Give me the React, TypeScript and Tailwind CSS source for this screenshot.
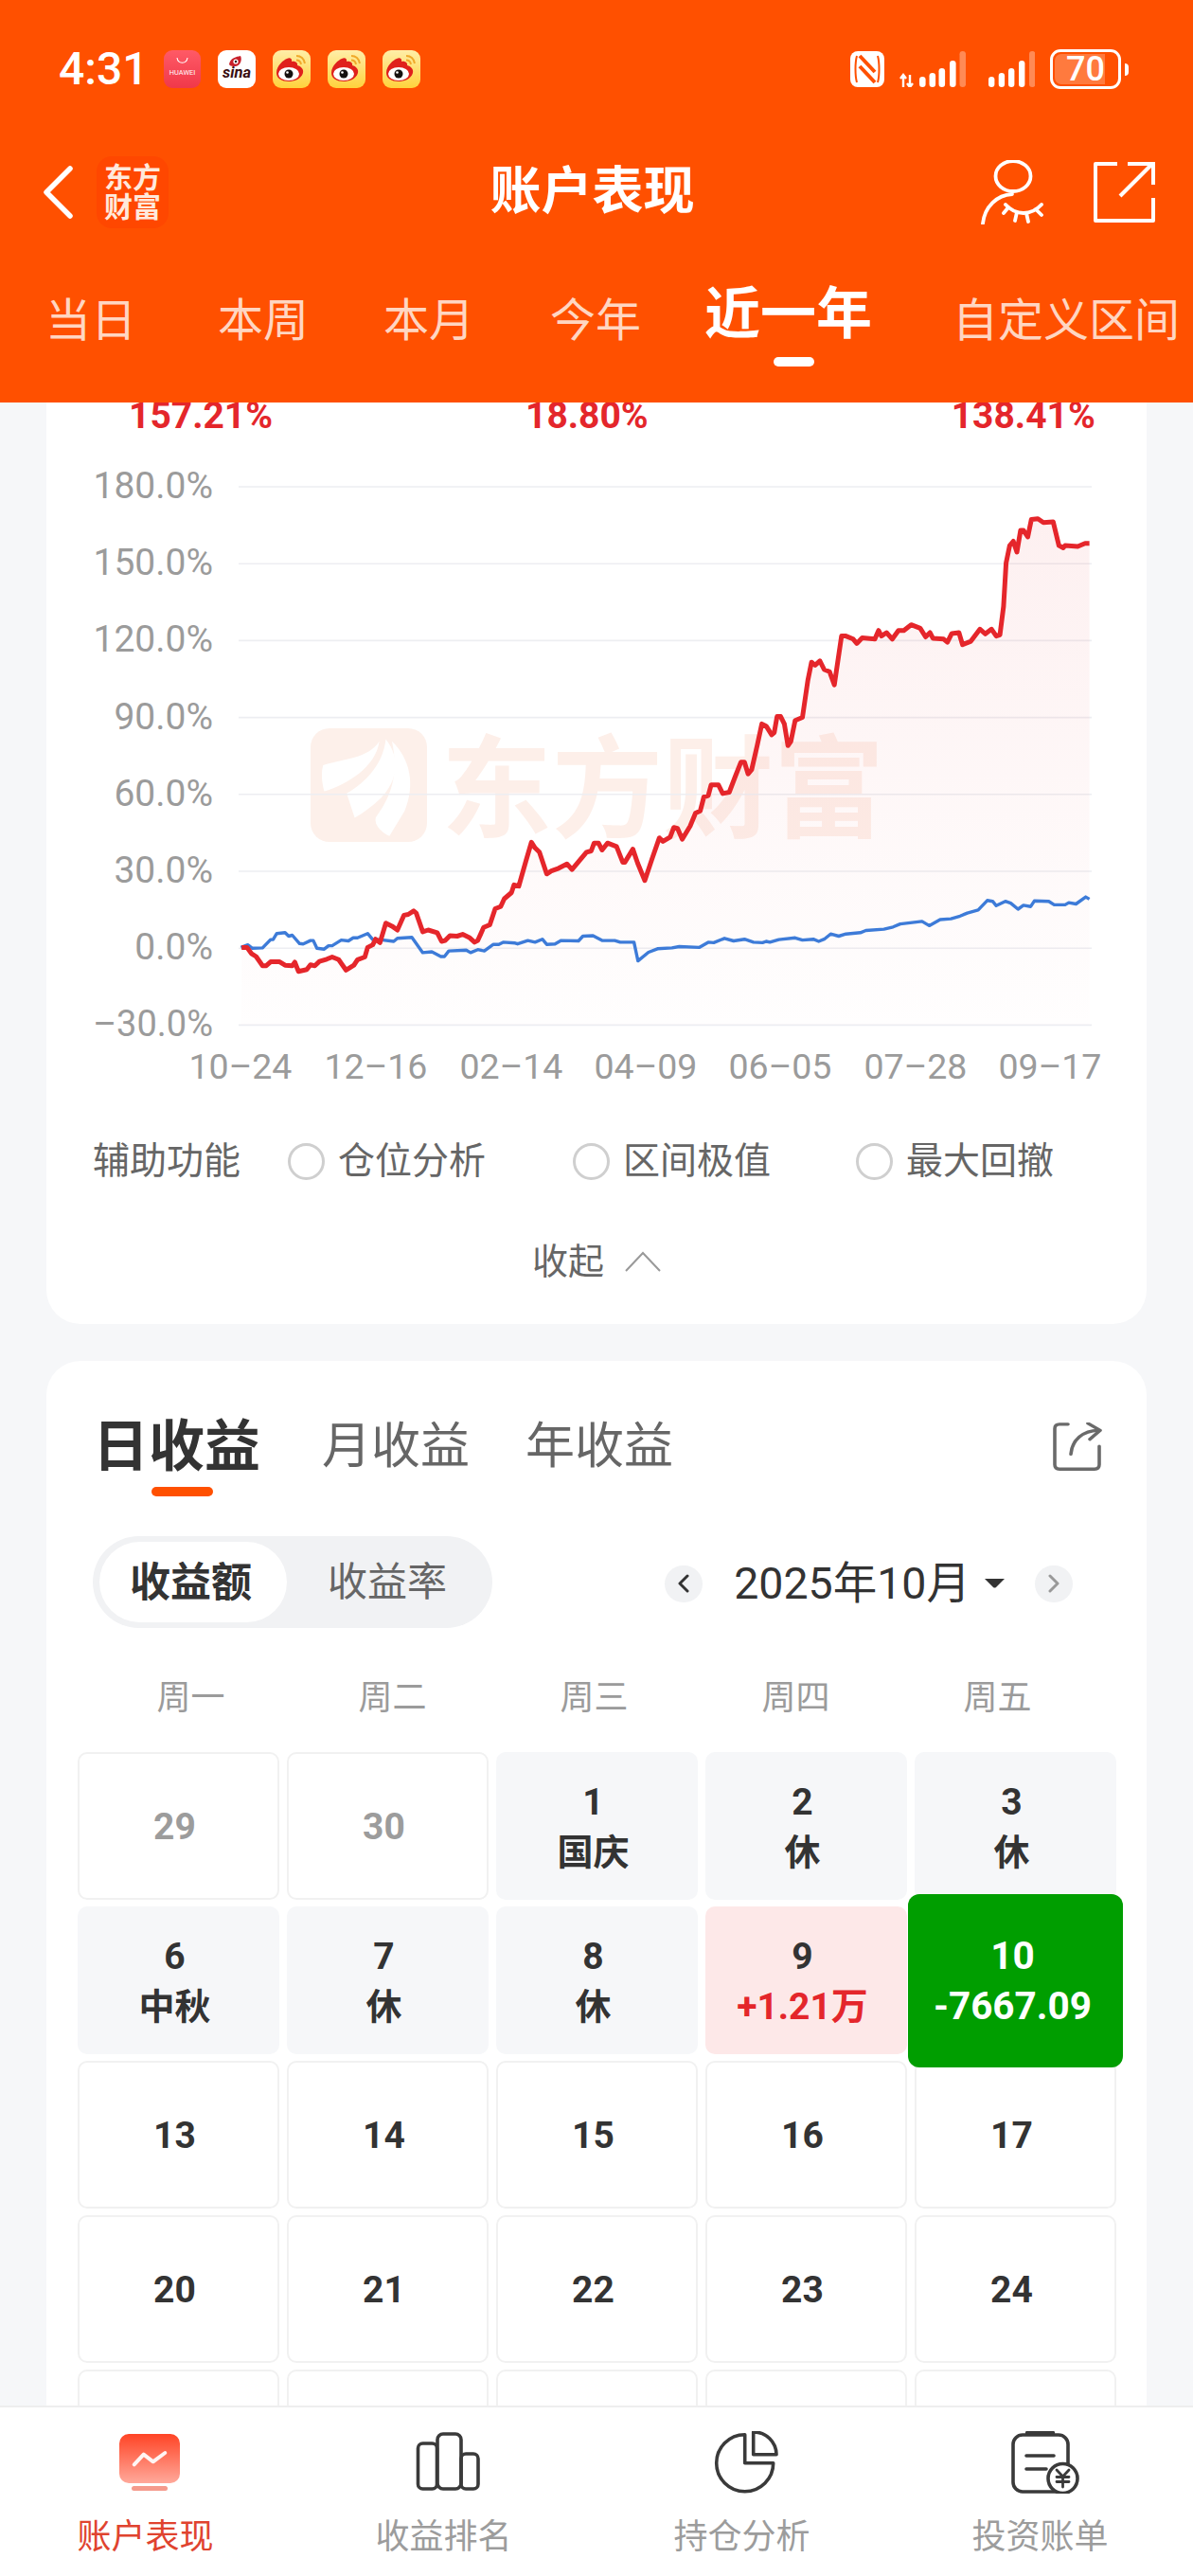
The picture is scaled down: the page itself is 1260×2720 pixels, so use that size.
import React from "react";

const zx3 = (x: number) => 60 + x / 2.6133;
const zx4 = (x: number) => 660 + x / 2.6133;
const zy = (y: number) => 420 + y / 2.1778;

const red3: number[][] = [[510,1264],[525,1264],[537,1278],[550,1285],[568,1306],[578,1306],[590,1297],[615,1297],[630,1305],[650,1306],[657,1298],[667,1319],[690,1315],[700,1304],[712,1306],[725,1296],[745,1291],[760,1286],[778,1292],[798,1316],[820,1305],[830,1292],[850,1286],[858,1264],[872,1258],[880,1245],[892,1253],[908,1208],[925,1215],[940,1224],[958,1190],[970,1188],[985,1180],[992,1185],[1010,1228],[1025,1224],[1050,1230],[1062,1250],[1072,1248],[1085,1237],[1105,1238],[1120,1234],[1140,1242],[1153,1252],[1162,1248],[1178,1218],[1195,1212],[1210,1175],[1225,1170],[1235,1152],[1255,1138],[1262,1120],[1275,1123],[1295,1065],[1310,1022],[1320,1035],[1332,1045],[1352,1095],[1365,1088],[1385,1082],[1408,1072],[1422,1085],[1445,1062],[1462,1045],[1475,1042],[1483,1024],[1495,1024],[1505,1040],[1520,1024],[1545,1032],[1562,1068]];
const red4: number[][] = [[0,1068],[22,1038],[35,1070],[55,1110],[75,1060],[95,1012],[105,1020],[125,1010],[135,988],[145,990],[158,1015],[180,985],[195,955],[208,950],[218,918],[230,915],[238,890],[258,890],[270,910],[288,907],[305,870],[320,838],[330,838],[340,865],[350,855],[365,800],[378,750],[390,755],[405,775],[412,770],[420,733],[430,733],[440,750],[450,800],[458,790],[470,742],[490,735],[505,650],[515,608],[525,615],[538,605],[550,625],[565,630],[578,660],[598,548],[610,548],[630,555],[640,565],[655,552],[690,555],[700,535],[708,548],[722,540],[738,555],[755,535],[770,535],[790,522],[815,530],[830,550],[842,540],[850,553],[880,555],[890,562],[902,542],[922,540],[932,568],[955,560],[980,532],[995,543],[1012,532],[1025,548],[1035,545],[1045,480],[1052,380],[1062,340],[1072,330],[1082,355],[1092,305],[1100,305],[1112,320],[1122,280],[1140,278],[1155,287],[1182,285],[1198,340],[1210,345],[1215,340],[1250,342],[1270,335],[1282,335]];
const blue3: number[][] = [[508,1264],[527,1258],[540,1266],[568,1265],[590,1246],[597,1246],[607,1232],[630,1230],[640,1238],[650,1236],[670,1255],[680,1256],[700,1248],[708,1248],[718,1266],[738,1268],[750,1260],[760,1260],[785,1247],[805,1249],[818,1242],[830,1242],[858,1232],[872,1246],[890,1246],[930,1250],[940,1243],[980,1241],[1010,1276],[1035,1274],[1060,1285],[1070,1285],[1082,1272],[1130,1270],[1142,1276],[1162,1269],[1180,1272],[1205,1257],[1220,1257],[1232,1252],[1265,1254],[1272,1256],[1300,1248],[1320,1252],[1340,1245],[1352,1257],[1375,1256],[1392,1248],[1440,1249],[1452,1238],[1480,1237],[1505,1248],[1540,1248],[1555,1252]];
const blue4: number[][] = [[0,1252],[25,1252],[36,1295],[65,1275],[90,1267],[130,1265],[150,1262],[205,1264],[230,1252],[245,1253],[275,1243],[300,1249],[330,1245],[355,1252],[380,1253],[390,1250],[400,1252],[425,1246],[470,1242],[490,1247],[520,1245],[535,1250],[550,1245],[568,1233],[590,1238],[610,1233],[650,1230],[665,1225],[715,1222],[740,1217],[760,1210],[820,1204],[840,1214],[870,1200],[900,1198],[925,1192],[945,1185],[975,1178],[1000,1156],[1015,1158],[1025,1168],[1050,1158],[1065,1162],[1085,1176],[1100,1167],[1120,1170],[1130,1157],[1170,1158],[1185,1166],[1215,1166],[1225,1161],[1245,1164],[1272,1148],[1282,1153]];

const toPts = (a: number[][], b: number[][]) =>
  [...a.map(([x, y]) => `${zx3(x).toFixed(1)},${zy(y).toFixed(1)}`), ...b.map(([x, y]) => `${zx4(x).toFixed(1)},${zy(y).toFixed(1)}`)].join(" ");
const redPts = toPts(red3, red4);
const bluePts = toPts(blue3, blue4);
const areaPts = `${zx3(510).toFixed(1)},1082 ${redPts} ${zx4(1282).toFixed(1)},1082`;

const yLabels = ["180.0%", "150.0%", "120.0%", "90.0%", "60.0%", "30.0%", "0.0%", "–30.0%"];
const xLabels: [string, number][] = [["10–24", 254], ["12–16", 397], ["02–14", 540], ["04–09", 682], ["06–05", 824], ["07–28", 967], ["09–17", 1109]];

function Chart() {
  return (
    <svg width="1162" height="700" viewBox="49 460 1162 700" className="block">
      <defs>
        <linearGradient id="area" x1="0" y1="0" x2="0" y2="1">
          <stop offset="0" stopColor="#e5262b" stopOpacity="0.07" />
          <stop offset="1" stopColor="#e5262b" stopOpacity="0.005" />
        </linearGradient>
      </defs>
      <rect x="328" y="769" width="123" height="120" rx="20" fill="#fdf0ea" />
      <g transform="translate(60 420) scale(0.3827 0.4592)" fill="#ffffff">
        <path d="M735 845 C790 830 860 830 890 790 C880 850 800 890 738 905 C730 880 730 860 735 845Z" />
        <path d="M800 910 C850 885 900 845 908 785 C950 830 940 880 895 920 C870 940 845 955 822 966 Z" />
        <path d="M880 965 C920 920 945 870 925 790 C975 830 990 890 960 950 L918 1008 C900 1000 875 985 880 965Z" />
      </g>
      <text x="466" y="875" fontSize="117" fontWeight="700" fill="#fdefe9">东方财富</text>
      {yLabels.map((t, i) => (
        <g key={t}>
          <line x1="252" x2="1153" y1={514 + i * 81.2} y2={514 + i * 81.2} stroke="#edeef2" strokeWidth="1.6" />
          <text x="225" y={526 + i * 81.2} textAnchor="end" fontSize={i === 7 ? 38 : 39} fill="#9b9b9b">{t}</text>
        </g>
      ))}
      {xLabels.map(([t, x]) => (
        <text key={t} x={x} y="1139" textAnchor="middle" fontSize="37.500" fill="#9b9b9b">{t}</text>
      ))}
      <polygon points={areaPts} fill="url(#area)" />
      <polyline points={bluePts} fill="none" stroke="#3d7bd8" strokeWidth="3.4" strokeLinejoin="round" />
      <polyline points={redPts} fill="none" stroke="#e5262b" strokeWidth="5" strokeLinejoin="round" />
    </svg>
  );
}

function Huawei() {
  return (
    <svg width="39" height="40" viewBox="0 0 39 40">
      <defs>
        <linearGradient id="hw" x1="0" y1="0" x2="0" y2="1">
          <stop offset="0" stopColor="#ff5a66" />
          <stop offset="1" stopColor="#f0384a" />
        </linearGradient>
      </defs>
      <rect width="39" height="40" rx="9" fill="url(#hw)" />
      <path d="M14 8 C15 15 24 15 25 8" fill="none" stroke="#fff" strokeWidth="1.1" />
      <text x="19.5" y="26" textAnchor="middle" fontSize="7.4" fill="#fff">HUAWEI</text>
    </svg>
  );
}

function Sina() {
  return (
    <svg width="40" height="40" viewBox="0 0 40 40">
      <rect width="40" height="40" rx="9" fill="#fff" />
      <path d="M12 15 C13 8 20 7 24 6 C26 10 24 16 19 17 C16 17 13 17 12 15Z" fill="#c8202a" />
      <circle cx="19" cy="12" r="2.6" fill="#fff" />
      <circle cx="19" cy="12" r="1.2" fill="#2a0c10" />
      <text x="20" y="29" textAnchor="middle" fontSize="16.5" fontWeight="700" fontStyle="italic" fill="#3a0e12">sina</text>
    </svg>
  );
}

function Weibo({ id }: { id: string }) {
  return (
    <svg width="40" height="40" viewBox="0 0 40 40">
      <defs>
        <linearGradient id={id} x1="0" y1="0" x2="0" y2="1">
          <stop offset="0" stopColor="#ffeea8" />
          <stop offset="1" stopColor="#ffd23c" />
        </linearGradient>
      </defs>
      <rect width="40" height="40" rx="9" fill={`url(#${id})`} />
      <path d="M25 6 C30 6 33 9 34 14 M25 10.5 C27.5 10.5 29.5 12 30 15" fill="none" stroke="#f0a92a" strokeWidth="2" />
      <path d="M4 24 C4 16 12 10 15 9 C18 7 21 9 20 12 C24 11 27 14 26 16 C30 17 33 20 32 24 C30 31 22 33 17 33 C10 33 4 30 4 24Z" fill="#e0201c" />
      <ellipse cx="17" cy="25" rx="11" ry="7" fill="#fff" />
      <circle cx="17" cy="25" r="4.5" fill="#15110f" />
      <circle cx="15.5" cy="23.5" r="1.3" fill="#fff" />
    </svg>
  );
}

function Bars({ x, w }: { x: number[]; w: number }) {
  const tops = [27, 23, 18, 10, 0];
  return (
    <>
      {x.map((v, i) => (
        <rect key={v} x={v} y={tops[i]} width={w} height={38 - tops[i]} rx={w / 2} fill={i === 4 ? "#ff8a55" : "#fff"} />
      ))}
    </>
  );
}

function StatusBar() {
  return (
    <div className="flex h-[44px] items-center justify-between pl-[62px] pr-[68px] mt-[50px]">
      <div className="flex items-center">
        <span className="text-[48px] font-medium leading-[44px] text-white">4:31</span>
        <div className="ml-[16px] flex items-center gap-[18px]">
          <Huawei />
          <Sina />
          <Weibo id="wb1" />
          <Weibo id="wb2" />
          <Weibo id="wb3" />
        </div>
      </div>
      <div className="flex items-center">
        <svg width="36" height="38" viewBox="0 0 36 38">
          <rect width="36" height="38" rx="8" fill="#fff" />
          <path d="M7 5 C5 12 5 26 7 33 M29 5 C31 12 31 26 29 33" fill="none" stroke="#ff5000" strokeWidth="2" />
          <path d="M10 5 L26 22 M10 16 L26 33" fill="none" stroke="#ff5000" strokeWidth="4" />
        </svg>
        <svg className="ml-[16px]" width="70" height="38" viewBox="0 0 70 38">
          <path d="M4 25 V38 M1 29 L4 25 L7 29 M11 25 V38 M8 34 L11 38 L14 34" fill="none" stroke="#fff" strokeWidth="2.4" />
          <Bars x={[21, 31.5, 41.5, 53, 63.5]} w={6.6} />
        </svg>
        <svg className="ml-[24px]" width="49" height="38" viewBox="0 0 49 38">
          <Bars x={[0, 10.7, 21, 32, 43]} w={6.4} />
        </svg>
        <div className="relative ml-[16px] h-[42px] w-[75px] rounded-[11px] border-[3px] border-white">
          <div className="absolute bottom-[2px] left-[2px] top-[2px] w-[53px] rounded-l-[7px] bg-[#ff7a3e]" />
          <span className="absolute inset-0 flex items-center justify-center text-[36px] font-medium leading-none text-white">70</span>
        </div>
        <div className="ml-[4px] h-[13px] w-[4px] rounded-r-full bg-white" />
      </div>
    </div>
  );
}

function NavBar() {
  return (
    <div className="mt-[66px] grid h-[84px] grid-cols-[1fr_auto_1fr] items-center pl-[45px] pr-[40px]">
      <div className="flex items-center">
        <svg width="32" height="56" viewBox="0 0 32 56">
          <path d="M29 3 L4 28 L29 53" fill="none" stroke="#fff" strokeWidth="5.5" strokeLinecap="round" strokeLinejoin="round" />
        </svg>
        <div className="ml-[25px] flex h-[76px] w-[76px] flex-col items-center justify-center rounded-[16px] bg-[#ff4700] text-[30px] font-bold leading-[31px] text-[#ffe9dc]">
          <span>东方</span>
          <span>财富</span>
        </div>
      </div>
      <div className="pr-[14px] text-[54px] font-bold leading-[64px] text-white">账户表现</div>
      <div className="flex items-center justify-end gap-[53px]">
        <svg width="67" height="68" viewBox="0 0 67 68" fill="none" stroke="#fff" strokeWidth="3.8" strokeLinecap="round">
          <ellipse cx="35" cy="17" rx="18.5" ry="16" />
          <path d="M34 36 C18 37 5 49 3 67" />
          <path d="M27 47 C38 59 54 59 65 47" />
          <path d="M30 50 L25 56 M39 55 L37 64 M49 56 L51 65 M59 52 L65 58" />
        </svg>
        <svg width="65" height="66" viewBox="0 0 65 66" fill="none" stroke="#fff" strokeWidth="4">
          <path d="M25 3 H2 V63 H63 V39" strokeLinejoin="round" />
          <path d="M28 37 L62 3" />
          <path d="M36 3 H63 V25" />
        </svg>
      </div>
    </div>
  );
}

function Tabs() {
  return (
    <div className="mt-[64px] flex h-[60px] items-center text-[48px] leading-[60px] text-[#ffd6c2]">
      <span className="ml-[48px]">当日</span>
      <span className="ml-[86px]">本周</span>
      <span className="ml-[79px]">本月</span>
      <span className="ml-[80px]">今年</span>
      <span className="relative mb-[14px] ml-[67px] text-[59px] font-bold text-white">
        近一年
        <span className="absolute left-[73px] top-[75px] h-[10px] w-[43px] rounded-full bg-white" />
      </span>
      <span className="ml-[85px]">自定义区间</span>
    </div>
  );
}

function Radio({ label, className }: { label: string; className: string }) {
  return (
    <div className={`flex items-center ${className}`}>
      <span className="h-[39px] w-[39px] rounded-full border-[3px] border-[#cfcfcf]" />
      <span className="ml-[14px]">{label}</span>
    </div>
  );
}

type Cell = { n: string; sub?: string; kind: "muted" | "holiday" | "plain" | "gain" | "loss" };
const cells: Cell[] = [
  { n: "29", kind: "muted" }, { n: "30", kind: "muted" }, { n: "1", sub: "国庆", kind: "holiday" }, { n: "2", sub: "休", kind: "holiday" }, { n: "3", sub: "休", kind: "holiday" },
  { n: "6", sub: "中秋", kind: "holiday" }, { n: "7", sub: "休", kind: "holiday" }, { n: "8", sub: "休", kind: "holiday" }, { n: "9", sub: "+1.21万", kind: "gain" }, { n: "10", sub: "-7667.09", kind: "loss" },
  { n: "13", kind: "plain" }, { n: "14", kind: "plain" }, { n: "15", kind: "plain" }, { n: "16", kind: "plain" }, { n: "17", kind: "plain" },
  { n: "20", kind: "plain" }, { n: "21", kind: "plain" }, { n: "22", kind: "plain" }, { n: "23", kind: "plain" }, { n: "24", kind: "plain" },
  { n: "", kind: "plain" }, { n: "", kind: "plain" }, { n: "", kind: "plain" }, { n: "", kind: "plain" }, { n: "", kind: "plain" },
];

function CalCell({ c }: { c: Cell }) {
  if (c.kind === "loss") {
    return (
      <div className="relative h-[156px] rounded-[10px] bg-[#f6f7f9]">
        <div className="absolute -bottom-[14px] -left-[7px] -right-[7px] -top-[13px] z-10 flex flex-col items-center justify-center rounded-[12px] bg-[#009e00] pr-[6px] text-[40.500px] font-bold leading-[53px] text-white">
          <span>{c.n}</span>
          <span>{c.sub}</span>
        </div>
      </div>
    );
  }
  const box =
    c.kind === "holiday"
      ? "bg-[#f6f7f9] text-[#333333]"
      : c.kind === "gain"
        ? "bg-[#fde8e8] text-[#333333]"
        : c.kind === "muted"
          ? "border-2 border-[#f1f1f1] bg-white text-[#9c9c9c]"
          : "border-2 border-[#f1f1f1] bg-white text-[#333333]";
  return (
    <div className={`flex h-[156px] flex-col items-center justify-center rounded-[10px] pr-2 pt-[3px] text-[39px] font-bold leading-[53px] ${box}`}>
      <span>{c.n}</span>
      {c.sub && <span className={c.kind === "gain" ? "text-[#e4262b]" : "text-[38px]"}>{c.sub}</span>}
    </div>
  );
}

function PerfCard() {
  return (
    <section className="rounded-b-[36px] bg-white pb-[44px]">
      <div className="-mt-[8px] flex h-[43px] text-[39px] font-bold leading-[44px] text-[#e4262b]">
        <span className="ml-[87px]">157.21%</span>
        <span className="ml-[267px]">18.80%</span>
        <span className="ml-[320px]">138.41%</span>
      </div>
      <Chart />
      <div className="mt-[46px] flex h-[40px] items-center pl-[49px] text-[39px] leading-[40px] text-[#666666]">
        <span>辅助功能</span>
        <Radio label="仓位分析" className="ml-[50px]" />
        <Radio label="区间极值" className="ml-[92px]" />
        <Radio label="最大回撤" className="ml-[90px]" />
      </div>
      <div className="mt-[64px] flex h-[44px] items-center justify-center text-[38px] leading-[44px] text-[#666666]">
        <span>收起</span>
        <svg className="ml-[22px]" width="38" height="22" viewBox="0 0 38 22">
          <path d="M1 21 L19 2 L37 21" fill="none" stroke="#999" strokeWidth="2" />
        </svg>
      </div>
    </section>
  );
}

function DailyCard() {
  return (
    <section className="mt-[39px] rounded-t-[36px] bg-white pt-[60px]">
      <div className="flex h-[62px] items-center justify-between pl-[49px] pr-[47px]">
        <div className="flex items-center">
          <span className="relative text-[59px] font-bold leading-[62px] text-[#333333]">
            日收益
            <span className="absolute left-[62px] top-[73px] h-[10px] w-[65px] rounded-full bg-[#ff5000]" />
          </span>
          <span className="ml-[65px] text-[52px] leading-[62px] text-[#666666]">月收益</span>
          <span className="ml-[59px] text-[52px] leading-[62px] text-[#666666]">年收益</span>
        </div>
        <svg width="52" height="52" viewBox="0 0 52 56" preserveAspectRatio="none" fill="none" stroke="#6a6a6a" strokeWidth="3.6" strokeLinecap="round" strokeLinejoin="round">
          <path d="M16 2 H7 Q2 2 2 7 V48 Q2 53 7 53 H44 Q49 53 49 48 V27" />
          <path d="M19 36 C20 20 32 9 48 9" />
          <path d="M37 1 L50 9 L39 19" />
        </svg>
      </div>
      <div className="mt-[63px] flex h-[97px] items-center justify-between pl-[49px] pr-[78px]">
        <div className="flex h-[97px] w-[422px] items-center rounded-full bg-[#f1f2f4] pl-[7px] text-[42px] leading-[56px]">
          <span className="flex h-[85px] w-[198px] items-center justify-center rounded-full bg-white pr-[5px] text-[43px] font-bold text-[#333333]">收益额</span>
          <span className="ml-[43px] text-[#666666]">收益率</span>
        </div>
        <div className="flex items-center pt-[3px] text-[#333333]">
          <span className="flex h-[39px] w-[40px] items-center justify-center rounded-full bg-[#f1f2f4]">
            <svg width="14" height="20" viewBox="0 0 14 20"><path d="M11 2 L3 10 L11 18" fill="none" stroke="#333" strokeWidth="3" strokeLinecap="round" strokeLinejoin="round" /></svg>
          </span>
          <span className="ml-[33px] text-[46.5px] leading-[56px]">2025年10月</span>
          <svg className="ml-[15px]" width="21" height="10" viewBox="0 0 21 10"><path d="M0 0 H21 L12 9 Q10.500 10 9 9 Z" fill="#333" /></svg>
          <span className="ml-[32px] flex h-[39px] w-[40px] items-center justify-center rounded-full bg-[#f1f2f4]">
            <svg width="14" height="20" viewBox="0 0 14 20"><path d="M3 2 L11 10 L3 18" fill="none" stroke="#999" strokeWidth="3" strokeLinecap="round" strokeLinejoin="round" /></svg>
          </span>
        </div>
      </div>
      <div className="ml-[46px] mt-[52px] grid h-[44px] w-[1065px] grid-cols-5 items-center text-center text-[36px] leading-[44px] text-[#9b9b9b]">
        <span>周一</span>
        <span>周二</span>
        <span>周三</span>
        <span>周四</span>
        <span>周五</span>
      </div>
      <div className="ml-[33px] mr-[32px] mt-[35px] grid grid-cols-5 gap-x-[8px] gap-y-[7px]">
        {cells.map((c, i) => (
          <CalCell key={i} c={c} />
        ))}
      </div>
    </section>
  );
}

function BottomBar() {
  const label = "mt-[24px] mr-2 text-[36px] leading-[44px]";
  return (
    <nav className="z-20 grid h-[180px] shrink-0 grid-cols-4 border-t-2 border-[#eeeeee] bg-white pt-[25px]">
      <div className="flex flex-col items-center">
        <svg width="80" height="66" viewBox="0 0 80 66">
          <defs>
            <linearGradient id="tab1" x1="0" y1="0" x2="0" y2="1">
              <stop offset="0" stopColor="#ff4425" />
              <stop offset="1" stopColor="#ffa99b" />
            </linearGradient>
          </defs>
          <rect x="8" y="3" width="64" height="52" rx="10" fill="url(#tab1)" />
          <rect x="21" y="58" width="38" height="5" rx="2.5" fill="#f59a8c" />
          <path d="M23.700 35.300 L33.700 24.700 L43.700 32.300 L56.300 23" fill="none" stroke="#fff" strokeWidth="4" strokeLinecap="round" strokeLinejoin="round" opacity="0.92" />
        </svg>
        <span className={`${label} text-[#e0432f]`}>账户表现</span>
      </div>
      <div className="flex flex-col items-center">
        <svg width="80" height="66" viewBox="0 0 80 66" fill="none" stroke="#3a3a3a" strokeWidth="3.6" strokeLinejoin="round">
          <rect x="8.500" y="13" width="20" height="48" rx="5" />
          <rect x="29" y="3" width="25" height="58" rx="6" />
          <rect x="54" y="24" width="18" height="37" rx="5" />
        </svg>
        <span className={`${label} text-[#9c9c9c]`}>收益排名</span>
      </div>
      <div className="flex flex-col items-center">
        <svg width="80" height="66" viewBox="0 0 80 66" fill="none" stroke="#3a3a3a" strokeWidth="3.6" strokeLinejoin="round">
          <path d="M38.700 3.700 A30 30 0 1 0 68.700 33.700 H38.700 Z" />
          <path d="M47.700 1 A24 24 0 0 1 72 24.700 H47.700 Z" />
        </svg>
        <span className={`${label} text-[#9c9c9c]`}>持仓分析</span>
      </div>
      <div className="flex flex-col items-center">
        <svg width="80" height="66" viewBox="0 0 80 66" fill="none" stroke="#3a3a3a" strokeWidth="3.6" strokeLinecap="round">
          <rect x="7" y="4" width="58" height="60" rx="10" />
          <path d="M22 2 H49" strokeWidth="4.4" />
          <path d="M21 26 H50 M21 40 H42" />
          <circle cx="59.500" cy="50" r="15.500" fill="#fff" />
          <path d="M53 41 L59.500 48 L66 41 M59.500 48 V59 M53 48.500 H66 M53 53.500 H66" strokeWidth="2.8" />
        </svg>
        <span className={`${label} text-[#9c9c9c]`}>投资账单</span>
      </div>
    </nav>
  );
}

export default function App() {
  return (
    <div className="flex h-[2720px] w-[1260px] flex-col overflow-hidden bg-[#f6f7f9] font-['Roboto','Noto_Sans_CJK_SC',sans-serif]">
      <header className="z-20 h-[425px] shrink-0 overflow-hidden bg-[#ff5000] pt-px">
        <StatusBar />
        <NavBar />
        <Tabs />
      </header>
      <main className="min-h-0 flex-1 overflow-hidden px-[49px]">
        <PerfCard />
        <DailyCard />
      </main>
      <BottomBar />
    </div>
  );
}
